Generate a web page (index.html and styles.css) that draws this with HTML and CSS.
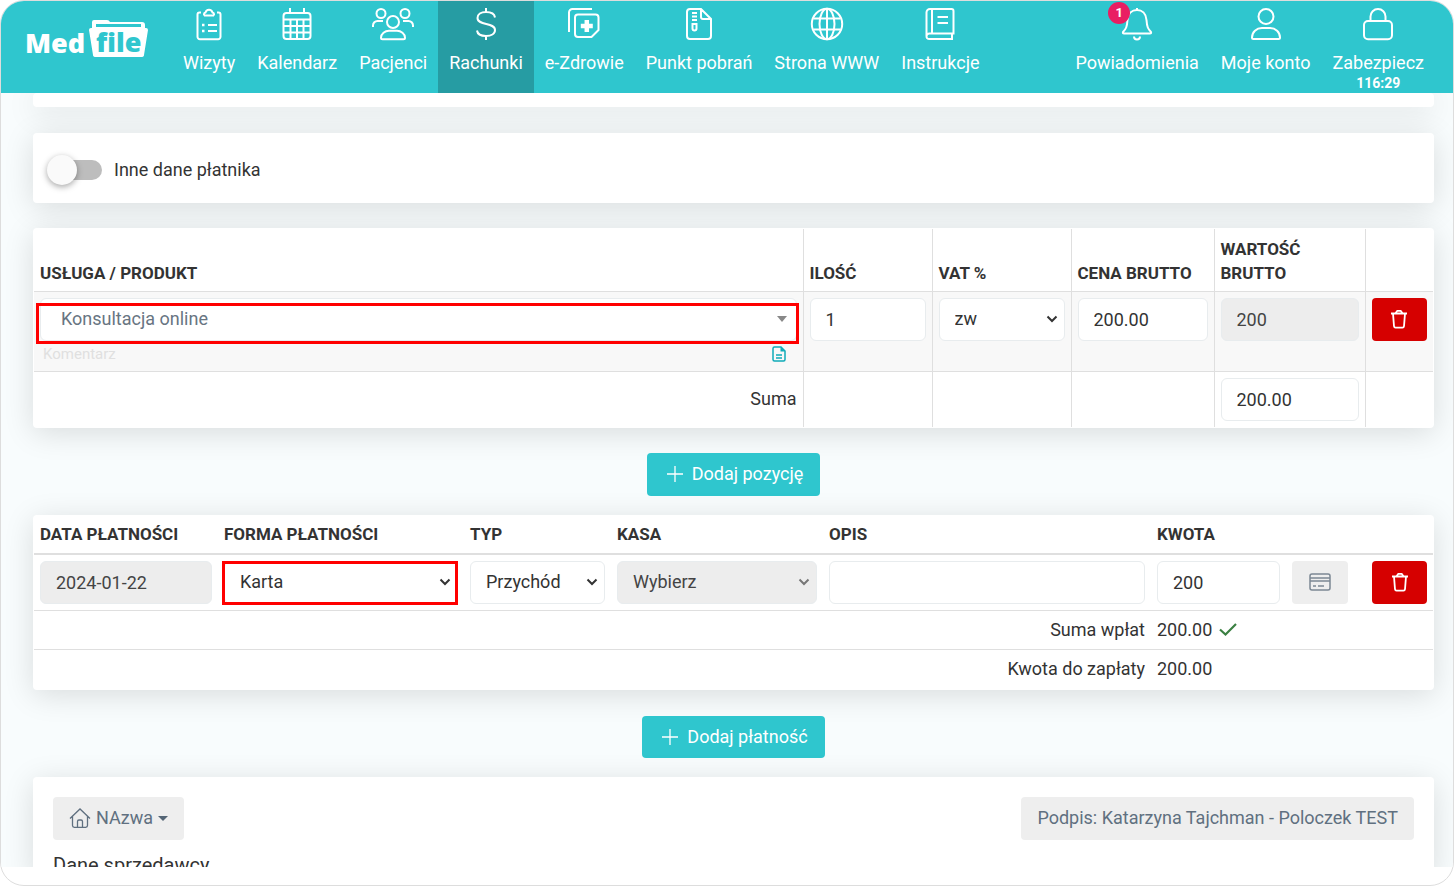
FILE: index.html
```html
<!DOCTYPE html>
<html lang="pl">
<head>
<meta charset="utf-8">
<title>MedFile – Rachunki</title>
<link rel="stylesheet" href="styles.css">
</head>
<body>
<div class="frame">
  <header class="topbar">
    <a class="logo" href="#" aria-label="MedFile">
      <svg width="124" height="48" viewBox="0 0 124 48">
        <path d="M67 11V5q0-2 2-2h13q2 0 3 2h32q3 0 3 3v3z" fill="#fff"/>
        <path d="M71 7h45v3H71z" fill="#2fc6ce"/>
        <path d="M66 11h55q2 0 2 2l-4 25q0 2-3 2H71q-3 0-3-2l-4-25q0-2 2-2z" fill="#fff"/>
        <text class="logo-med" x="0" y="36">Med</text>
        <text class="logo-file" x="71" y="35">file</text>
      </svg>
    </a>
    <nav class="menu">
      <a class="item" href="#"><svg class="icon" viewBox="0 0 32 32"><path d="M8 4.500H6.500a2 2 0 0 0-2 2V29a2.500 2.500 0 0 0 2.500 2.200h18A2.500 2.500 0 0 0 27.500 29V6.500a2 2 0 0 0-2-2h-1.500M11 7.500h10M11 7.500V6q0-1 1.500-1.500a3.600 3.600 0 0 1 7 0q1.500.5 1.500 1.500v1.500M15 17h9M15 23h9"/><path d="M9 17h2.500M9 23h2.500" stroke-width="2.500"/></svg><span>Wizyty</span></a>
      <a class="item" href="#"><svg class="icon" viewBox="0 0 32 32"><rect x="2.500" y="5" width="27" height="26" rx="3"/><path d="M9 0v5M23 0v5M3 11.500h26M3 18h26M3 24.500h26M9.500 11.500V31M16 11.500V31M22.500 11.500V31"/></svg><span>Kalendarz</span></a>
      <a class="item" href="#"><svg class="icon icon-wide" viewBox="0 0 42 32"><circle cx="9" cy="5.500" r="4.500"/><circle cx="33" cy="5.500" r="4.500"/><circle cx="21" cy="14" r="6"/><path d="M1 19v-1.500a4.500 4.500 0 0 1 4.500-4.500H11M41 19v-1.500a4.500 4.500 0 0 0-4.500-4.500H31M10.500 31.200q-1.500 0-1.500-1.500c0-4 4-7 8-7h8c4 0 8 3 8 7q0 1.500-1.500 1.500z"/></svg><span>Pacjenci</span></a>
      <a class="item item-active" href="#" aria-current="page"><svg class="icon" viewBox="0 0 32 32"><path d="M16 0v4M16 28v4M25 9.500C24.500 6 21 4 16 4S7.500 6.300 7.500 10c0 8 17.500 4 17.500 12 0 4-4 6-9 6s-8.500-2-9-5.500"/></svg><span>Rachunki</span></a>
      <a class="item" href="#"><svg class="icon" viewBox="0 0 32 32"><path d="M1 24V4.500A3.500 3.500 0 0 1 4.500 1H24M10 6.500h17.500a3 3 0 0 1 3 3V22L23.500 29H10a3 3 0 0 1-3-3V9.500a3 3 0 0 1 3-3z"/><path d="M18.800 12v12M12.800 18h12" stroke-width="4.500"/></svg><span>e-Zdrowie</span></a>
      <a class="item" href="#"><svg class="icon" viewBox="0 0 32 32"><path d="M18 1H7a3 3 0 0 0-3 3v24a3 3 0 0 0 3 3h18a3 3 0 0 0 3-3V11zM18 1v8a2 2 0 0 0 2 2h8M9 5h5M9 8.500h5M9 12h5M9.500 16h4v4.500a2 2 0 0 1-4 0z"/></svg><span>Punkt pobrań</span></a>
      <a class="item" href="#"><svg class="icon" viewBox="0 0 32 32"><circle cx="16" cy="16" r="15.200"/><ellipse cx="16" cy="16" rx="7.500" ry="15.200"/><path d="M2.500 10.500h27M2.500 21.500h27M16 1v30"/></svg><span>Strona WWW</span></a>
      <a class="item" href="#"><svg class="icon" viewBox="0 0 32 32"><path d="M5.500 25.500q-3 0-3 2.800t3 2.700h23.500M28 31v-5.500M5.500 25.500H29.500V3a2 2 0 0 0-2-2H6a3.500 3.500 0 0 0-3.500 3.500V28M8 1v24.500M13.500 9h10.500M13.500 15h10.500"/></svg><span>Instrukcje</span></a>
    </nav>
    <nav class="menu menu-right">
      <a class="item" href="#"><span class="bell"><svg class="icon" viewBox="0 0 32 32"><path d="M16 0v2M3 25.500q-1.500 0-1-1.500c3-3 4-5 4.500-12C7 5.500 11 2 16 2s9 3.500 9.500 10c.5 7 1.500 9 4.500 12q.5 1.500-1 1.500zM13 28.500a3 3 0 0 0 6 0"/></svg><span class="badge">1</span></span><span>Powiadomienia</span></a>
      <a class="item" href="#"><svg class="icon" viewBox="0 0 32 32"><circle cx="16" cy="8.500" r="7.500"/><path d="M3.500 31q-1.500 0-1.500-1.500C2 24 6.500 20 12 20h8c5.500 0 10 4 10 9.500q0 1.500-1.500 1.500z"/></svg><span>Moje konto</span></a>
      <a class="item" href="#"><svg class="icon" viewBox="0 0 32 32"><rect x="2" y="13" width="28" height="18.200" rx="4"/><path d="M8.500 13V8.500a7.500 7.500 0 0 1 15 0V13"/></svg><span>Zabezpiecz</span><span class="timer">116:29</span></a>
    </nav>
  </header>

  <main class="content">
    <section class="card card-cut"></section>

    <section class="card payer">
      <input class="switch" type="checkbox" id="payer">
      <label for="payer">Inne dane płatnika</label>
    </section>

    <section class="card card-table">
      <table class="grid items">
        <colgroup><col><col class="w-qty"><col class="w-vat"><col class="w-price"><col class="w-value"><col class="w-del"></colgroup>
        <thead>
          <tr><th>USŁUGA / PRODUKT</th><th>ILOŚĆ</th><th>VAT %</th><th>CENA BRUTTO</th><th>WARTOŚĆ BRUTTO</th><th></th></tr>
        </thead>
        <tbody>
          <tr class="shaded">
            <td>
              <div class="marked marked-product">
                <button class="field combo" type="button" aria-label="Usługa / produkt"><span>Konsultacja online</span><svg width="10" height="6" viewBox="0 0 10 6"><path d="M0 0h10L5 6z" fill="#888"/></svg></button>
              </div>
              <div class="note">
                <input class="note-input" type="text" placeholder="Komentarz" aria-label="Komentarz">
                <svg class="note-icon" width="14" height="16" viewBox="0 0 14 16"><path d="M2.500 1H9l4 4v8.500a1.500 1.500 0 0 1-1.500 1.500h-9A1.500 1.500 0 0 1 1 13.500v-11A1.500 1.500 0 0 1 2.500 1zM4 9h6M4 12h6" fill="none" stroke="#0fabb8" stroke-width="1.500"/><path d="M8.500 1v4.500H13z" fill="#0fabb8"/></svg>
              </div>
            </td>
            <td><input class="field" type="text" value="1" aria-label="Ilość"></td>
            <td><select class="field" aria-label="VAT %"><option>zw</option></select></td>
            <td><input class="field" type="text" value="200.00" aria-label="Cena brutto"></td>
            <td><input class="field" type="text" value="200" aria-label="Wartość brutto" disabled></td>
            <td><button class="btn btn-danger" type="button" aria-label="Usuń pozycję"><svg width="18" height="20" viewBox="0 0 18 20"><path d="M1 4.500h16M3 4.500l1 12.700q.2 1.500 1.500 1.500h7q1.300 0 1.500-1.500l1-12.700M5.500 4.300l1.800-2.500h3.400l1.800 2.500"/></svg></button></td>
          </tr>
          <tr>
            <td class="right">Suma</td><td></td><td></td><td></td>
            <td><input class="field" type="text" value="200.00" aria-label="Suma"></td><td></td>
          </tr>
        </tbody>
      </table>
    </section>

    <button class="btn btn-primary" type="button"><svg width="16" height="16" viewBox="0 0 16 16"><path d="M8 0v16M0 8h16"/></svg>Dodaj pozycję</button>

    <section class="card card-table">
      <table class="grid payments">
        <colgroup><col class="w-date"><col class="w-form"><col class="w-type"><col class="w-cash"><col><col class="w-amount"><col class="w-card"><col class="w-remove"></colgroup>
        <thead>
          <tr><th>DATA PŁATNOŚCI</th><th>FORMA PŁATNOŚCI</th><th>TYP</th><th>KASA</th><th>OPIS</th><th>KWOTA</th><th></th><th></th></tr>
        </thead>
        <tbody>
          <tr>
            <td><input class="field" type="text" value="2024-01-22" aria-label="Data płatności" disabled></td>
            <td><div class="marked marked-form"><select class="field" aria-label="Forma płatności"><option>Karta</option></select></div></td>
            <td><select class="field" aria-label="Typ"><option>Przychód</option></select></td>
            <td><select class="field" aria-label="Kasa" disabled><option>Wybierz</option></select></td>
            <td><input class="field" type="text" aria-label="Opis"></td>
            <td><input class="field" type="text" value="200" aria-label="Kwota"></td>
            <td><button class="btn btn-muted btn-icon" type="button" aria-label="Terminal płatniczy"><svg width="22" height="18" viewBox="0 0 22 18"><rect x="1" y="1" width="20" height="16" rx="2" fill="none" stroke="#7c8894" stroke-width="1.500"/><path d="M1 5h20M1 8h20M4 13h3M9 13h6" fill="none" stroke="#7c8894" stroke-width="1.500"/></svg></button></td>
            <td><button class="btn btn-danger" type="button" aria-label="Usuń płatność"><svg width="18" height="20" viewBox="0 0 18 20"><path d="M1 4.500h16M3 4.500l1 12.700q.2 1.500 1.500 1.500h7q1.300 0 1.500-1.500l1-12.700M5.500 4.300l1.800-2.500h3.400l1.800 2.500"/></svg></button></td>
          </tr>
          <tr class="total"><td class="right" colspan="5">Suma wpłat</td><td colspan="3">200.00 <svg class="tick" width="18" height="13" viewBox="0 0 18 13"><path d="M1 6.500l5.500 5L17 1" fill="none" stroke="#3b8042" stroke-width="2.200"/></svg></td></tr>
          <tr class="total"><td class="right" colspan="5">Kwota do zapłaty</td><td colspan="3">200.00</td></tr>
        </tbody>
      </table>
    </section>

    <button class="btn btn-primary btn-payment" type="button"><svg width="16" height="16" viewBox="0 0 16 16"><path d="M8 0v16M0 8h16"/></svg>Dodaj płatność</button>

    <section class="card seller">
      <div class="seller-bar">
        <button class="btn btn-muted" type="button"><svg width="22" height="20" viewBox="0 0 22 20"><path d="M1 10.500L11 1l10 9.500M3.500 8.500v9q0 1.800 1.800 1.800h11.400q1.800 0 1.800-1.800v-9M8.500 19v-5.500q0-1.500 1.500-1.500h2q1.500 0 1.500 1.500V19" fill="none" stroke="#607080" stroke-width="1.300"/></svg>NAzwa<svg width="10" height="5" viewBox="0 0 10 5"><path d="M0 0h10L5 5z" fill="#546575"/></svg></button>
        <button class="btn btn-muted" type="button">Podpis: Katarzyna Tajchman - Poloczek TEST</button>
      </div>
      <h2 class="seller-title">Dane sprzedawcy</h2>
    </section>
  </main>
</div>
</body>
</html>
```
FILE: styles.css
```css
* { box-sizing: border-box; }

body {
  margin: 0;
  background: #fff;
  color: #333;
  font: 18px/24px Roboto, "Noto Sans", sans-serif;
}

.frame {
  display: flex;
  flex-direction: column;
  height: 100vh;
  padding-bottom: 18px;
  border: 1px solid #ddd;
  border-radius: 24px;
  overflow: hidden;
}

/* Top bar */
.topbar {
  display: flex;
  flex: none;
  justify-content: space-between;
  height: 92px;
  padding: 0 18px 0 24px;
  background: #2fc6ce;
}

.logo { padding-top: 16px; margin-right: 23px; }
.logo svg { overflow: visible; }
.logo-med, .logo-file { font-family: "Open Sans", sans-serif; font-weight: 800; }
.logo-med { font-size: 27px; fill: #fff; }
.logo-file { font-size: 27px; fill: #2fc6ce; }

.menu { display: flex; flex: 1; }
.menu-right { flex: none; }

.item {
  display: flex;
  flex-direction: column;
  align-items: center;
  padding: 7px 11px 0;
  color: #fff;
  text-decoration: none;
  white-space: nowrap;
}
.item-active { background: #269ca3; }

.icon {
  display: block;
  width: 32px;
  height: 32px;
  margin-bottom: 11px;
  fill: none;
  stroke: #fff;
  stroke-width: 2;
  overflow: visible;
}
.icon-wide { width: 42px; }

.timer { font-size: 14px; font-weight: 700; line-height: 16px; }

.bell { position: relative; }
.badge {
  position: absolute;
  top: -6px;
  left: -13px;
  width: 22px;
  border-radius: 11px;
  background: #e91e63;
  font-size: 13px;
  font-weight: 700;
  line-height: 22px;
  text-align: center;
}

/* Content */
.content {
  display: flex;
  flex: 1;
  flex-direction: column;
  align-items: center;
  min-height: 0;
  padding: 0 19px 0 32px;
  background: #f8fcfd;
  overflow: hidden;
}

.card {
  flex: none;
  width: 100%;
  border-radius: 4px;
  background: #fff;
  box-shadow: 0 5px 30px rgba(0, 0, 0, 0.13);
}
.card-cut { height: 14px; margin-bottom: 26px; }
.card-table { padding: 1px; }

.payer {
  display: flex;
  align-items: center;
  gap: 12px;
  margin-bottom: 25px;
  padding: 25px 23px 21px;
}

.switch {
  position: relative;
  width: 46px;
  height: 20px;
  margin: 0;
  border-radius: 10px;
  background: #bdbdbd;
  appearance: none;
}
.switch::before {
  content: "";
  position: absolute;
  top: -5px;
  left: -9px;
  width: 30px;
  height: 30px;
  border-radius: 50%;
  background: #fafafa;
  box-shadow: 0 2px 6px rgba(0, 0, 0, 0.35);
}

/* Tables */
.grid {
  width: 100%;
  border-collapse: collapse;
  table-layout: fixed;
}
.grid th {
  padding: 6px;
  font-size: 17px;
  font-weight: 700;
  text-align: left;
  vertical-align: bottom;
}
.grid td { padding: 6px; vertical-align: top; }
.grid .right { text-align: right; vertical-align: middle; }
.grid tbody tr { border-top: 1px solid #dfdfdf; }

.items th { height: 62px; }
.items th + th, .items td + td { border-left: 1px solid #dfdfdf; }
.items .shaded { background: #f8f8f8; }
.payments tbody tr:first-child { border-top: 2px solid #dfdfdf; }
.payments th { padding: 6px 6px 7px; }
.total td { padding: 7px 6px; }
.total:last-child td { padding-bottom: 8px; }

.w-qty { width: 129px; }
.w-vat { width: 139px; }
.w-price { width: 143px; }
.w-value { width: 151px; }
.w-del { width: 68px; }
.w-date { width: 184px; }
.w-form { width: 246px; }
.w-type { width: 147px; }
.w-cash { width: 212px; }
.w-amount { width: 135px; }
.w-card { width: 80px; }
.w-remove { width: 67px; }

/* Controls */
.field {
  display: block;
  width: 100%;
  height: 43px;
  margin: 0;
  padding: 0 15px;
  border: 1px solid #e8ecee;
  border-radius: 6px;
  background: #fff;
  color: #333;
  font: inherit;
}
.field:disabled { background-color: #ededed; color: #444; opacity: 1; }

select.field {
  background-image: url("data:image/svg+xml,%3Csvg xmlns='http://www.w3.org/2000/svg' width='12' height='8' viewBox='0 0 12 8'%3E%3Cpath d='M1.500 1.500L6 6l4.500-4.500' fill='none' stroke='%23333' stroke-width='2'/%3E%3C/svg%3E");
  background-repeat: no-repeat;
  background-position: right 6px center;
  appearance: none;
}
select.field:disabled {
  background-image: url("data:image/svg+xml,%3Csvg xmlns='http://www.w3.org/2000/svg' width='12' height='8' viewBox='0 0 12 8'%3E%3Cpath d='M1.500 1.500L6 6l4.500-4.500' fill='none' stroke='%23777' stroke-width='2'/%3E%3C/svg%3E");
}

.combo {
  display: flex;
  align-items: center;
  justify-content: space-between;
  padding: 0 9px 0 20px;
  color: #687582;
}

.marked { position: relative; }
.marked::after {
  content: "";
  position: absolute;
  border: 3px solid #f00;
  pointer-events: none;
}
.marked-product::after { inset: 5px -2px -3px -4px; }
.marked-form::after { inset: 0 0 -1px -2px; }

.note {
  display: flex;
  align-items: center;
  justify-content: space-between;
  height: 24px;
  padding: 2px 11px 0 3px;
}
.note-input {
  flex: 1;
  min-width: 0;
  padding: 0;
  border: 0;
  background: none;
  font: inherit;
  font-size: 15px;
  line-height: 20px;
}
.note-input::placeholder { color: #e0e0e0; }

.btn {
  display: flex;
  flex: none;
  align-items: center;
  justify-content: center;
  height: 43px;
  padding: 0 16px;
  border: 0;
  border-radius: 4px;
  font: inherit;
  white-space: nowrap;
}
.btn-primary {
  gap: 9px;
  margin: 25px 0 19px;
  padding: 0 17px 0 20px;
  background: #2fc6ce;
  color: #fff;
}
.btn-payment { height: 42px; margin-top: 26px; }
.btn-primary path { stroke: #fff; stroke-width: 1.3; }
.btn-danger { width: 55px; background: #d60000; }
.btn-danger path { fill: none; stroke: #fff; stroke-width: 1.8; }
.btn-muted { gap: 5px; background: #eee; color: #607080; }
.btn-icon { width: 56px; }
.tick { margin-left: 2px; }

.seller { flex: 1 0 auto; padding: 20px 20px 0; }
.seller-bar { display: flex; justify-content: space-between; }
.seller-title { margin: 13px 0 0; font-size: 20px; font-weight: 400; }
```
